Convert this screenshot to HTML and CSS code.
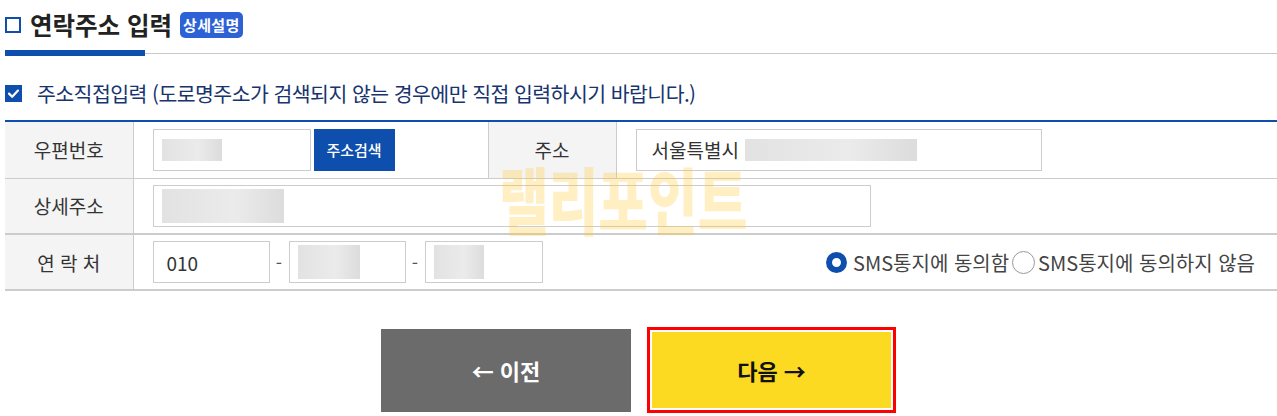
FILE: index.html
```html
<!DOCTYPE html>
<html lang="ko">
<head>
<meta charset="utf-8">
<link rel="stylesheet" href="styles.css">
</head>
<body>
<div class="page">
  <div class="section-title">
    <span class="title-box"></span>
    <h2 class="title-text">연락주소 입력</h2>
    <span class="badge">상세설명</span>
  </div>
  <div class="title-rule"><span class="rule-bar"></span><span class="rule-line"></span></div>

  <label class="direct">
    <span class="check">
      <svg width="17" height="17" viewBox="0 0 17 17"><rect width="17" height="17" fill="#0e4fad"/><path d="M4 8.6 L7.2 11.8 L13 5.6" fill="none" stroke="#fff" stroke-width="2.2" stroke-linecap="round" stroke-linejoin="round"/></svg>
    </span>
    <span class="direct-text">주소직접입력 (도로명주소가 검색되지 않는 경우에만 직접 입력하시기 바랍니다.)</span>
  </label>

  <div class="form-wrap">
    <table class="form">
      <colgroup><col class="c-lab"><col class="c-val"><col class="c-lab"><col></colgroup>
      <tr class="r1">
        <th>우편번호</th>
        <td>
          <div class="inline">
            <div class="inp w158"><span class="blur b1"></span></div>
            <button class="search">주소검색</button>
          </div>
        </td>
        <th>주소</th>
        <td><div class="inp w405"><span class="addr">서울특별시</span><span class="blur b2"></span></div></td>
      </tr>
      <tr class="r2">
        <th>상세주소</th>
        <td colspan="3"><div class="inp w718"><span class="blur b3"></span></div></td>
      </tr>
      <tr class="r3">
        <th>연 락 처</th>
        <td colspan="3">
          <div class="phone-row">
            <div class="inline">
              <div class="inp w117"><span class="num">010</span></div>
              <span class="dash">-</span>
              <div class="inp w117"><span class="blur b4"></span></div>
              <span class="dash">-</span>
              <div class="inp w118"><span class="blur b5"></span></div>
            </div>
            <div class="radios">
              <span class="radio on"></span><span class="rlabel">SMS통지에 동의함</span>
              <span class="radio"></span><span class="rlabel">SMS통지에 동의하지 않음</span>
            </div>
          </div>
        </td>
      </tr>
    </table>
    <div class="watermark">랠리포인트</div>
  </div>

  <div class="actions">
    <button class="btn prev">← 이전</button>
    <div class="next-frame"><button class="btn next">다음 →</button></div>
  </div>
</div>
</body>
</html>
```

FILE: styles.css
```css
* { box-sizing: border-box; }
html, body { margin: 0; padding: 0; background: #fff; }
body {
  font-family: "Noto Sans CJK KR", "Noto Sans", sans-serif;
  color: #333;
  width: 1277px;
  overflow: hidden;
}
.page { padding-left: 5px; }

.section-title {
  display: flex;
  align-items: center;
  height: 50px;
  padding-bottom: 2px;
}
.title-box {
  width: 16px; height: 16px;
  border: 2.5px solid #0e4fad;
  margin-right: 9px;
  margin-top: 1px;
}
.title-text {
  margin: 0;
  font-size: 24.5px;
  font-weight: 700;
  color: #222;
  letter-spacing: 0px;
}
.badge {
  margin-left: 8px;
  background: #2d62d6;
  color: #fff;
  font-size: 15px;
  font-weight: 700;
  height: 26px;
  line-height: 26px;
  padding: 0 3px;
  letter-spacing: 0.3px;
  border-radius: 5px;
  margin-top: 2px;
}
.title-rule { display: flex; align-items: center; height: 6px; }
.rule-bar { width: 140px; height: 6px; background: #0e4fad; }
.rule-line { flex: 1; height: 1px; background: #c8c8c8; }

.direct {
  display: flex;
  align-items: center;
  margin-top: 28px;
  height: 18px;
}
.check { width: 17px; height: 17px; display: block; }
.check svg { display: block; }
.direct-text {
  margin-left: 15px;
  font-size: 20.5px;
  color: #17346e;
  letter-spacing: -0.55px;
}

.form-wrap { position: relative; margin-top: 18px; }
.form {
  width: 1272px;
  border-collapse: collapse;
  border-top: 2px solid #0e4fad;
  table-layout: fixed;
}
.c-lab { width: 128px; }
.c-val { width: 355px; }
.form th {
  background: #f4f4f4;
  font-weight: 400;
  font-size: 19px;
  color: #333;
  border-right: 1px solid #ccc;
  border-left: 1px solid #ccc;
  padding: 0;
  text-align: center;
}
.form tr > th:first-child { border-left: none; }
.form td { padding: 0 0 0 19px; vertical-align: middle; }
.r1 { height: 57px; border-bottom: 1px solid #ccc; }
.r2 { height: 56px; border-bottom: 2px solid #ccc; }
.r3 { height: 56px; border-bottom: 2px solid #ccc; }

.inline { display: flex; align-items: center; }
.inp {
  height: 42px;
  border: 1px solid #ccc;
  background: #fff;
  display: flex;
  align-items: center;
  padding-left: 8px;
  font-size: 19px;
  color: #333;
}
.w158 { width: 158px; }
.w405 { width: 406px; padding-left: 15px; }
.w718 { width: 718px; }
.w117 { width: 117px; }
.w118 { width: 118px; }
.blur { display: block; height: 22px; background: linear-gradient(90deg, #e2e2e2, #ebebeb 60%, #dcdcdc); }
.b1 { width: 60px; }
.b2 { width: 172px; margin-left: 6px; }
.b3 { width: 122px; height: 34px; }
.b4 { width: 62px; height: 34px; }
.b5 { width: 50px; height: 34px; }
.num { padding-left: 5px; }
.search {
  margin-left: 3px;
  width: 81px;
  height: 42px;
  border: none;
  background: #0e4fad;
  color: #fff;
  font-family: inherit;
  font-size: 15px;
  font-weight: 500;
  padding: 0;
}
.dash { width: 19px; text-align: center; font-size: 18px; color: #555; }

.phone-row { display: flex; align-items: center; justify-content: space-between; padding-right: 19px; }
.radios { display: flex; align-items: center; font-size: 20px; color: #444; letter-spacing: 0px; }
.radio {
  width: 23px; height: 23px;
  border-radius: 50%;
  border: 1px solid #999;
  margin-right: 3px;
  background: #fff;
}
.radio.on { border: 6px solid #0e4fad; width: 21px; height: 21px; margin-right: 6px; }
.rlabel { margin-right: 3px; }

.watermark {
  position: absolute;
  left: 494px;
  top: 41px;
  font-size: 54px;
  font-weight: 900;
  color: rgba(255, 196, 40, 0.28);
  letter-spacing: 0px;
  transform: scaleY(1.35);
  transform-origin: top left;
  pointer-events: none;
  line-height: 1;
}

.actions {
  display: flex;
  justify-content: center;
  align-items: center;
  gap: 16px;
  margin-top: 36px;
  padding-right: 5px;
}
.btn {
  border: none;
  font-family: inherit;
  font-size: 22px;
  font-weight: 700;
  padding: 0;
}
.prev {
  width: 250px; height: 83px;
  background: #6b6b6b;
  color: #fff;
}
.next-frame {
  width: 249px; height: 86px;
  border: 3px solid #f00;
  padding: 2px;
  background: #fff;
}
.next {
  width: 100%; height: 100%;
  background: #fdda22;
  color: #111;
}
```
